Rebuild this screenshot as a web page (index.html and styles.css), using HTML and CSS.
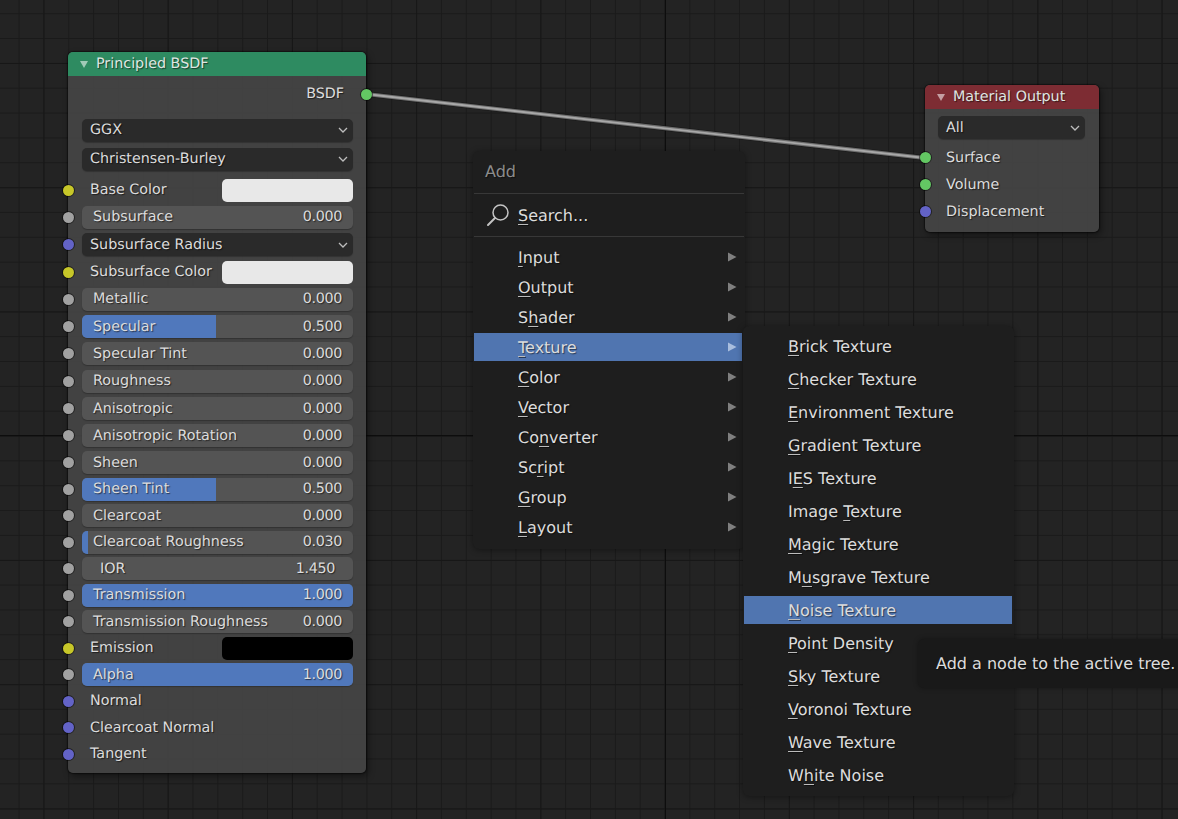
FILE: index.html
```html
<!DOCTYPE html>
<html lang="en">
<head>
<meta charset="utf-8">
<title>Shader nodes</title>
<link rel="stylesheet" href="styles.css">
</head>
<body>
<svg class="defs" width="0" height="0" aria-hidden="true">
  <symbol id="chev" viewBox="0 0 10 6"><path d="M1 1 L5 5 L9 1" fill="none" stroke="#bdbdbd" stroke-width="1.3"/></symbol>
  <symbol id="tri" viewBox="0 0 10 10"><path d="M1 2 H9 L5 9 Z" fill="#fff" fill-opacity=".55"/></symbol>
  <symbol id="arrow" viewBox="0 0 10 10"><path d="M1 0.5 L9.5 5 L1 9.5 Z"/></symbol>
</svg>
<main class="canvas">
  <svg class="wire" width="1178" height="819" aria-hidden="true">
    <path class="wire-shadow" d="M366 94 C 420 100, 870 152, 925 158"/>
    <path class="wire-mid" d="M366 94 C 420 100, 870 152, 925 158"/>
    <path class="wire-core" d="M366 94 C 420 100, 870 152, 925 158"/>
  </svg>

  <section class="node node-bsdf">
    <header class="node-head head-green"><svg class="tri"><use href="#tri"/></svg>Principled BSDF</header>
    <div class="node-body">
      <div class="row row-out"><span>BSDF</span><i class="sock sock-out green"></i></div>
      <div class="selects">
        <div class="dd"><span>GGX</span><svg class="chev"><use href="#chev"/></svg></div>
        <div class="dd"><span>Christensen-Burley</span><svg class="chev"><use href="#chev"/></svg></div>
      </div>
      <div class="group-a">
        <div class="row"><i class="sock yellow"></i><span class="lbl">Base Color</span><b class="swatch white"></b></div>
        <div class="row"><i class="sock grey"></i><div class="sl"><span>Subsurface</span><span>0.000</span></div></div>
        <div class="row"><i class="sock purple"></i><div class="dd"><span>Subsurface Radius</span><svg class="chev"><use href="#chev"/></svg></div></div>
        <div class="row"><i class="sock yellow"></i><span class="lbl">Subsurface Color</span><b class="swatch white"></b></div>
        <div class="row"><i class="sock grey"></i><div class="sl"><span>Metallic</span><span>0.000</span></div></div>
        <div class="row"><i class="sock grey"></i><div class="sl"><em style="width:49.5%"></em><span>Specular</span><span>0.500</span></div></div>
        <div class="row"><i class="sock grey"></i><div class="sl"><span>Specular Tint</span><span>0.000</span></div></div>
        <div class="row"><i class="sock grey"></i><div class="sl"><span>Roughness</span><span>0.000</span></div></div>
        <div class="row"><i class="sock grey"></i><div class="sl"><span>Anisotropic</span><span>0.000</span></div></div>
        <div class="row"><i class="sock grey"></i><div class="sl"><span>Anisotropic Rotation</span><span>0.000</span></div></div>
      </div>
      <div class="group-b">
        <div class="row"><i class="sock grey"></i><div class="sl"><span>Sheen</span><span>0.000</span></div></div>
        <div class="row"><i class="sock grey"></i><div class="sl"><em style="width:49.5%"></em><span>Sheen Tint</span><span>0.500</span></div></div>
        <div class="row"><i class="sock grey"></i><div class="sl"><span>Clearcoat</span><span>0.000</span></div></div>
        <div class="row"><i class="sock grey"></i><div class="sl"><em style="width:2.2%"></em><span>Clearcoat Roughness</span><span>0.030</span></div></div>
        <div class="row"><i class="sock grey"></i><div class="sl sl-num"><span>IOR</span><span>1.450</span></div></div>
        <div class="row"><i class="sock grey"></i><div class="sl"><em style="width:100%"></em><span>Transmission</span><span>1.000</span></div></div>
        <div class="row"><i class="sock grey"></i><div class="sl"><span>Transmission Roughness</span><span>0.000</span></div></div>
        <div class="row"><i class="sock yellow"></i><span class="lbl">Emission</span><b class="swatch black"></b></div>
        <div class="row"><i class="sock grey"></i><div class="sl"><em style="width:100%"></em><span>Alpha</span><span>1.000</span></div></div>
        <div class="row"><i class="sock purple"></i><span class="lbl">Normal</span></div>
        <div class="row"><i class="sock purple"></i><span class="lbl">Clearcoat Normal</span></div>
        <div class="row"><i class="sock purple"></i><span class="lbl">Tangent</span></div>
      </div>
    </div>
  </section>

  <section class="node node-output">
    <header class="node-head head-red"><svg class="tri"><use href="#tri"/></svg>Material Output</header>
    <div class="node-body">
      <div class="dd"><span>All</span><svg class="chev"><use href="#chev"/></svg></div>
      <div class="outs">
        <div class="row"><i class="sock green"></i><span class="lbl">Surface</span></div>
        <div class="row"><i class="sock green"></i><span class="lbl">Volume</span></div>
        <div class="row"><i class="sock purple"></i><span class="lbl">Displacement</span></div>
      </div>
    </div>
  </section>

  <nav class="menu menu-add">
    <div class="menu-title">Add</div>
    <div class="menu-search">
      <svg class="search-ico" viewBox="0 0 24 24"><circle cx="14.5" cy="9.5" r="7.5" fill="none" stroke="#c4c4c4" stroke-width="1.5"/><path d="M9 15 L2 22" stroke="#c4c4c4" stroke-width="2" stroke-linecap="round"/></svg>
      <span><u>S</u>earch...</span>
    </div>
    <ul class="menu-list">
      <li><span><u>I</u>nput</span><svg class="arr"><use href="#arrow"/></svg></li>
      <li><span><u>O</u>utput</span><svg class="arr"><use href="#arrow"/></svg></li>
      <li><span>S<u>h</u>ader</span><svg class="arr"><use href="#arrow"/></svg></li>
      <li class="on"><span><u>T</u>exture</span><svg class="arr"><use href="#arrow"/></svg></li>
      <li><span><u>C</u>olor</span><svg class="arr"><use href="#arrow"/></svg></li>
      <li><span><u>V</u>ector</span><svg class="arr"><use href="#arrow"/></svg></li>
      <li><span>Co<u>n</u>verter</span><svg class="arr"><use href="#arrow"/></svg></li>
      <li><span>Sc<u>r</u>ipt</span><svg class="arr"><use href="#arrow"/></svg></li>
      <li><span><u>G</u>roup</span><svg class="arr"><use href="#arrow"/></svg></li>
      <li><span><u>L</u>ayout</span><svg class="arr"><use href="#arrow"/></svg></li>
    </ul>
  </nav>

  <nav class="menu menu-tex">
    <ul class="menu-list">
      <li><span><u>B</u>rick Texture</span></li>
      <li><span><u>C</u>hecker Texture</span></li>
      <li><span><u>E</u>nvironment Texture</span></li>
      <li><span><u>G</u>radient Texture</span></li>
      <li><span>I<u>E</u>S Texture</span></li>
      <li><span>Image <u>T</u>exture</span></li>
      <li><span><u>M</u>agic Texture</span></li>
      <li><span>M<u>u</u>sgrave Texture</span></li>
      <li class="on"><span><u>N</u>oise Texture</span></li>
      <li><span><u>P</u>oint Density</span></li>
      <li><span><u>S</u>ky Texture</span></li>
      <li><span><u>V</u>oronoi Texture</span></li>
      <li><span><u>W</u>ave Texture</span></li>
      <li><span>W<u>h</u>ite Noise</span></li>
    </ul>
  </nav>

  <div class="tooltip">Add a node to the active tree.</div>
</main>
</body>
</html>
```

FILE: styles.css
```css
* { box-sizing: border-box; }
html, body { margin: 0; padding: 0; height: 100%; overflow: hidden; background: #232323; }
.defs { position: absolute; }
body, .canvas { font-family: "DejaVu Sans", sans-serif; font-size: 14.3px; color: #dcdcdc; text-rendering: geometricPrecision; }
ul { list-style: none; margin: 0; padding: 0; }
em, i, b { font-style: normal; font-weight: normal; }

.canvas {
  position: relative;
  width: 1178px;
  height: 819px;
  overflow: hidden;
  background-color: #232323;
  background-image:
    linear-gradient(to right, #0d0d0d 0, #0d0d0d 1.3px, transparent 1.3px),
    linear-gradient(to bottom, #0d0d0d 0, #0d0d0d 1.3px, transparent 1.3px),
    linear-gradient(to right, #171717 0, #171717 1.3px, transparent 1.3px),
    linear-gradient(to bottom, #171717 0, #171717 1.3px, transparent 1.3px),
    linear-gradient(to right, #1a1a1a 0, #1a1a1a 1.2px, transparent 1.2px),
    linear-gradient(to bottom, #1a1a1a 0, #1a1a1a 1.2px, transparent 1.2px);
  background-size:
    2000px 100%, 100% 2000px,
    124.25px 100%, 100% 124.25px,
    24.85px 100%, 100% 24.85px;
  background-repeat: no-repeat, no-repeat, repeat, repeat, repeat, repeat;
  background-position:
    664.6px 0, 0 435.4px,
    43.4px 0, 0 63px,
    18.6px 0, 0 13.2px;
}

.wire { position: absolute; left: 0; top: 0; }
.wire path { fill: none; }
.wire-shadow { stroke: #111; stroke-width: 5.5; opacity: .45; }
.wire-mid { stroke: #6e6e6e; stroke-width: 4; }
.wire-core { stroke: #a8a8a8; stroke-width: 1.8; }

.node {
  position: absolute;
  border-radius: 5px;
  background: rgba(68, 68, 68, .94);
  box-shadow: 0 0 1px 1px rgba(0,0,0,.45), 2px 3px 7px rgba(0,0,0,.45);
  text-shadow: 1px 1px 1px rgba(0,0,0,.55);
}
.node-bsdf { left: 68px; top: 52px; width: 298px; height: 721px; }
.node-output { left: 925px; top: 85px; width: 174px; height: 147px; }

.node-head {
  display: flex;
  align-items: center;
  height: 24px;
  padding: 0 0 1px 11px;
  border-radius: 5px 5px 0 0;
  color: #dfe6e2;
}
.head-green { background: #2e8b61; }
.head-red { background: #7d2c33; }
.tri { width: 10px; height: 10px; margin-right: 7px; flex: none; }

.node-body { position: relative; }
.node-bsdf .node-body { padding-top: 4.5px; }

.row { position: relative; display: flex; align-items: center; height: 27.3px; padding: 0 13px 0 14px; }
.group-b .row { height: 26.5px; }
.row-out { justify-content: flex-end; padding-right: 22px; height: 27px; }
.selects { display: flex; flex-direction: column; gap: 6px; padding: 11px 13px 0 14px; margin-bottom: 6px; }

.sock {
  position: absolute;
  left: -5.5px;
  top: 50%;
  width: 11px;
  height: 11px;
  margin-top: -5.5px;
  border-radius: 50%;
  box-shadow: 0 0 0 1px rgba(0,0,0,.5);
}
.sock-out { left: auto; right: -5.5px; }
.yellow { background: #c7c729; }
.grey { background: #a1a1a1; }
.purple { background: #6363c7; }
.green { background: #63c763; }

.dd {
  display: flex;
  align-items: center;
  justify-content: space-between;
  width: 100%;
  height: 23px;
  padding: 0 5px 0 8px;
  background: #2a2a2a;
  border-radius: 5px;
  box-shadow: 0 1px 1px rgba(0,0,0,.25);
}
.chev { width: 10px; height: 6px; }

.lbl { padding-left: 8px; flex: 1; }
.swatch { width: 131px; height: 23px; border-radius: 5px; flex: none; }
.white { background: #e8e8e8; }
.black { background: #000; }

.sl {
  position: relative;
  display: flex;
  justify-content: space-between;
  align-items: center;
  width: 100%;
  height: 23px;
  padding: 0 11px;
  background: #545454;
  border-radius: 5px;
  overflow: hidden;
  box-shadow: 0 1px 1px rgba(0,0,0,.25);
}
.sl span { position: relative; }
.sl span:last-child { letter-spacing: -.35px; }
.sl em { position: absolute; left: 0; top: 0; bottom: 0; background: #5078bc; }
.sl-num { padding: 0 18px; }

.node-output .dd { position: absolute; left: 13px; right: 14px; top: 7px; width: auto; }
.node-output .outs { padding-top: 35px; }
.node-output .row { padding-left: 13px; height: 27px; }

.menu {
  position: absolute;
  background: #1e1e1e;
  border-radius: 6px;
  box-shadow: 0 1px 6px rgba(0,0,0,.4);
  text-shadow: 1px 1px 1px rgba(0,0,0,.5);
  font-size: 16px;
}
.menu u { text-decoration: underline; text-decoration-thickness: 1px; text-underline-offset: 3px; text-decoration-color: #bcbcbc; }
.menu-add { left: 473px; top: 151px; width: 272px; height: 398px; }
.menu-tex { left: 743px; top: 326px; width: 271px; height: 470px; padding-top: 3.5px; }

.menu-title { height: 43px; padding: 11px 11px 0; color: #8c8c8c; border-bottom: 1px solid #383838; margin: 0 1px; }
.menu-search { display: flex; align-items: center; height: 43px; padding-left: 12px; border-bottom: 1px solid #383838; margin: 0 1px; }
.search-ico { width: 24px; height: 24px; margin-right: 8px; }
.menu-add .menu-list { padding-top: 5px; }

.menu-list li { position: relative; display: flex; align-items: center; justify-content: space-between; height: 30px; padding: 0 8px 0 45px; }
.menu-tex .menu-list li { height: 33px; padding-left: 45px; }
.menu-list li.on::before { content: ""; position: absolute; left: 1px; right: 3px; top: 1px; bottom: 1px; background: #5075b0; }
.menu-tex .menu-list li.on::before { left: 1px; right: 2px; top: 2.5px; bottom: 2.5px; }
.menu-list li > * { position: relative; }
.arr { width: 10px; height: 10px; fill: #7f7f7f; }
.on .arr { fill: #a9bede; }

.tooltip {
  position: absolute;
  left: 918px;
  top: 639px;
  width: 300px;
  height: 49px;
  padding: 0 18px;
  display: flex;
  align-items: center;
  background: #191919;
  border-radius: 6px;
  box-shadow: 0 0 5px rgba(0,0,0,.35);
  font-size: 16px;
  text-shadow: 1px 1px 1px rgba(0,0,0,.5);
  white-space: nowrap;
}
```
